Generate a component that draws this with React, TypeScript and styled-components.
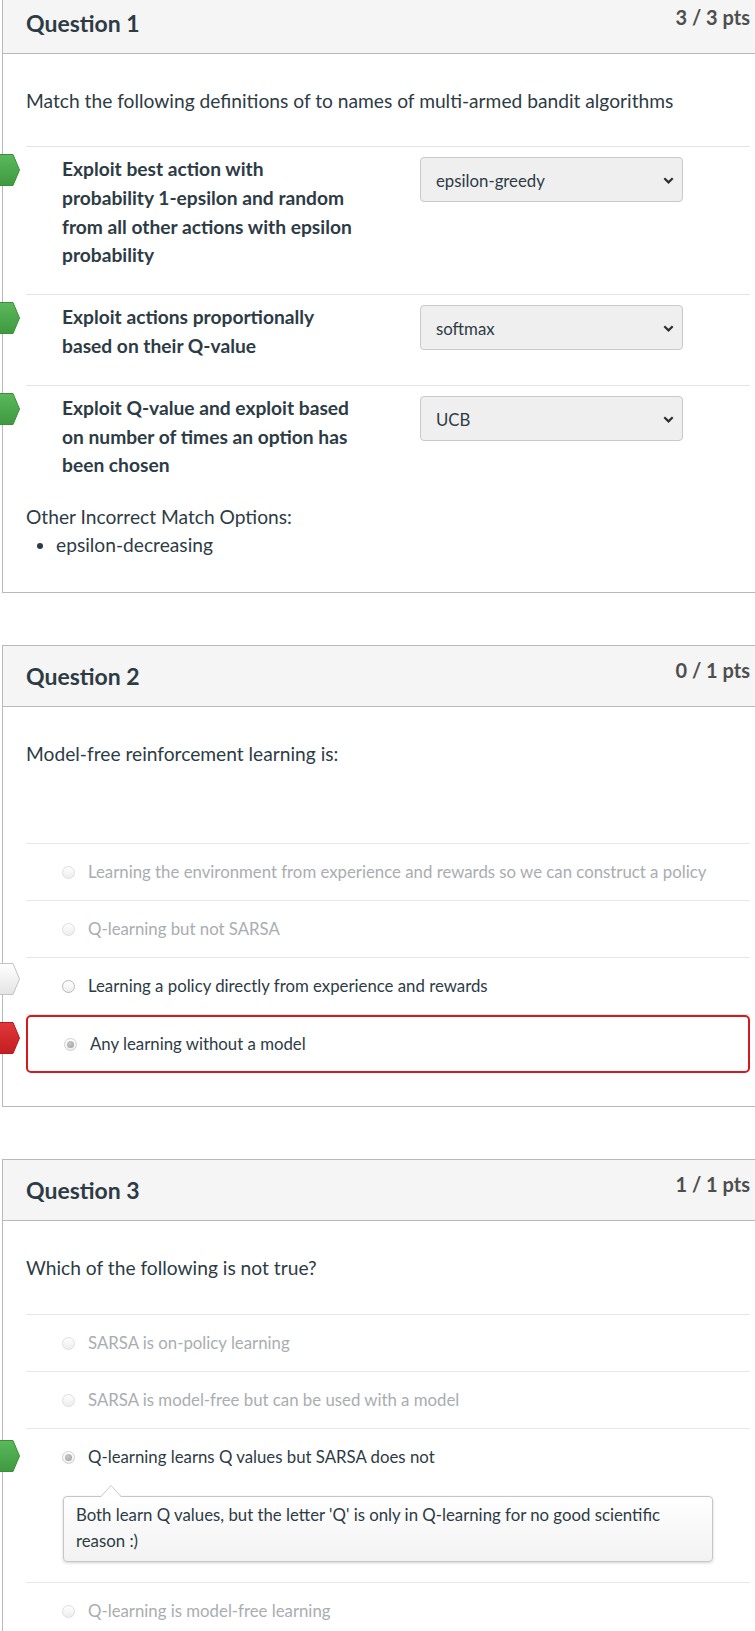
import React from 'react';
import styled, { createGlobalStyle, css } from 'styled-components';

const GlobalStyle = createGlobalStyle`
  html, body {
    margin: 0;
    padding: 0;
    background: #ffffff;
    overflow: hidden;
  }
  body {
    font-family: Lato, "Noto Sans", Arial, sans-serif;
    color: #2d3b45;
    width: 755px;
    height: 1631px;
  }
`;

const Page = styled.main`
  display: flex;
  flex-direction: column;
  gap: 52px;
  margin-top: -8px;
  padding-left: 2px;
`;

const Card = styled.section`
  width: 772px;
  box-sizing: border-box;
  border: 1px solid #b9b9b9;
  background: #fff;
`;

const Header = styled.header`
  height: 60px;
  background: #f5f5f5;
  border-bottom: 1px solid #b9b9b9;
  display: flex;
  align-items: center;
  justify-content: space-between;
  padding: 0 23px;
`;

const Title = styled.h2`
  margin: 0;
  font-size: 23px;
  font-weight: 700;
  color: #2d3b45;
`;

const Points = styled.div`
  font-size: 20px;
  font-weight: 700;
  color: #4e4e4e;
  margin-bottom: 12px;
`;

const Body = styled.div`
  padding: 33px 23px 33px;
`;

const Prompt = styled.p<{ $gap: number }>`
  margin: 0 0 ${(p) => p.$gap}px;
  font-size: 19.2px;
  line-height: 28px;
`;

type MarkKind = 'correct' | 'wrong' | 'answer';

const MarkerSvg = styled.svg<{ $top: number }>`
  position: absolute;
  left: -26px;
  top: ${(p) => p.$top}px;
  width: 20px;
  height: 32px;
  overflow: visible;
`;

const markerColors: Record<MarkKind, [string, string, string]> = {
  correct: ['#5bb85b', '#3f9a3f', '#3a8f3a'],
  wrong: ['#e0383a', '#c41e22', '#b51b1f'],
  answer: ['#ffffff', '#e4e4e4', '#c3c3c3'],
};

const Marker = ({ kind, top }: { kind: MarkKind; top: number }) => {
  const [a, b, stroke] = markerColors[kind];
  const id = `mk-${kind}`;
  return (
    <MarkerSvg $top={top} viewBox="0 0 20 32">
      <defs>
        <linearGradient id={id} x1="0" y1="0" x2="0" y2="1">
          <stop offset="0" stopColor={a} />
          <stop offset="1" stopColor={b} />
        </linearGradient>
      </defs>
      <polygon
        points="-2,0.5 13,0.5 19.5,16 13,31.5 -2,31.5"
        fill={`url(#${id})`}
        stroke={stroke}
        strokeWidth="1"
      />
    </MarkerSvg>
  );
};

const MatchRow = styled.div`
  position: relative;
  display: grid;
  grid-template-columns: 394px 263px;
  align-items: start;
  border-top: 1px solid #e4e4e4;
  padding: 8px 0 24px;
`;

const MatchLabel = styled.div`
  padding-left: 36px;
  width: 293px;
  font-weight: 700;
  font-size: 19.2px;
  line-height: 28.8px;
`;

const Select = styled.div`
  height: 45px;
  box-sizing: border-box;
  margin-top: 2px;
  border: 1px solid #c9c9c9;
  border-radius: 4px;
  background: #efefef;
  display: flex;
  align-items: center;
  justify-content: space-between;
  padding: 2px 8px 0 15px;
  font-size: 16.8px;
  color: #2d3b45;
`;

const Chevron = () => (
  <svg width="11" height="7" viewBox="0 0 11 7">
    <path d="M1.3 1.3 L5.5 5.4 L9.7 1.3" fill="none" stroke="#2f2f2f" strokeWidth="2.2" />
  </svg>
);

const OtherTitle = styled.div`
  font-size: 19.2px;
  line-height: 26px;
`;

const OtherList = styled.ul`
  margin: 1px 0 0;
  padding-left: 30px;
  font-size: 19.2px;
  line-height: 28px;
`;

const AnswerItem = styled.div`
  position: relative;
  border-top: 1px solid #e8e8e8;
`;

const AnswerLine = styled.div<{ $faded?: boolean; $wrong?: boolean }>`
  display: flex;
  align-items: center;
  padding: 16px 0 16px 36px;
  font-size: 16.8px;
  line-height: 24px;
  color: ${(p) => (p.$faded ? '#a9adb0' : '#2d3b45')};
  ${(p) =>
    p.$wrong &&
    css`
      border: 2px solid #d41a1f;
      border-radius: 5px;
      padding: 15px 0 15px 36px;
    `}
`;

const Radio = styled.span<{ $checked?: boolean; $faded?: boolean }>`
  position: relative;
  flex-shrink: 0;
  width: 13px;
  height: 13px;
  box-sizing: border-box;
  margin-right: 13px;
  border-radius: 50%;
  border: 1px solid ${(p) => (p.$faded ? '#dedede' : '#b8b8b8')};
  background: linear-gradient(#ffffff, #ededed);
  ${(p) =>
    p.$checked &&
    css`
      border-color: #d0d0d0;
      &::after {
        content: '';
        position: absolute;
        inset: 2px;
        border-radius: 50%;
        background: radial-gradient(circle at 40% 35%, #c9c9c9, #9e9e9e);
      }
    `}
`;

const Comment = styled.div`
  position: relative;
  margin: 11px 37px 20px 37px;
  padding: 5px 12px 7px;
  border: 1px solid #c6c6c6;
  border-radius: 4px;
  background: linear-gradient(#ffffff, #f2f2f2);
  box-shadow: 0 1px 3px rgba(0, 0, 0, 0.18);
  font-size: 16.8px;
  line-height: 26px;
  color: #2d3b45;

  &::before,
  &::after {
    content: '';
    position: absolute;
    left: 36px;
    width: 0;
    height: 0;
    border-left: 11px solid transparent;
    border-right: 11px solid transparent;
  }
  &::before {
    top: -12px;
    border-bottom: 12px solid #c6c6c6;
  }
  &::after {
    top: -11px;
    left: 37px;
    border-left-width: 10px;
    border-right-width: 10px;
    border-bottom: 11px solid #ffffff;
  }
`;

type Match = { text: string; value: string };

const matches: Match[] = [
  {
    text: 'Exploit best action with probability 1-epsilon and random from all other actions with epsilon probability',
    value: 'epsilon-greedy',
  },
  { text: 'Exploit actions proportionally based on their Q-value', value: 'softmax' },
  {
    text: 'Exploit Q-value and exploit based on number of times an option has been chosen',
    value: 'UCB',
  },
];

type Answer = {
  text: string;
  faded?: boolean;
  checked?: boolean;
  wrong?: boolean;
  marker?: MarkKind;
  markerTop?: number;
  comment?: string;
};

const q2Answers: Answer[] = [
  {
    text: 'Learning the environment from experience and rewards so we can construct a policy',
    faded: true,
  },
  { text: 'Q-learning but not SARSA', faded: true },
  {
    text: 'Learning a policy directly from experience and rewards',
    marker: 'answer',
    markerTop: 5,
  },
  { text: 'Any learning without a model', checked: true, wrong: true, marker: 'wrong', markerTop: 7 },
];

const q3Answers: Answer[] = [
  { text: 'SARSA is on-policy learning', faded: true },
  { text: 'SARSA is model-free but can be used with a model', faded: true },
  {
    text: 'Q-learning learns Q values but SARSA does not',
    checked: true,
    marker: 'correct',
    markerTop: 11,
    comment:
      "Both learn Q values, but the letter 'Q' is only in Q-learning for no good scientific reason :)",
  },
  { text: 'Q-learning is model-free learning', faded: true },
];

const AnswerList = ({ answers }: { answers: Answer[] }) => (
  <div>
    {answers.map((a) => (
      <AnswerItem key={a.text}>
        {a.marker && <Marker kind={a.marker} top={a.markerTop ?? 10} />}
        <AnswerLine $faded={a.faded} $wrong={a.wrong}>
          <Radio $checked={a.checked} $faded={a.faded} />
          {a.text}
        </AnswerLine>
        {a.comment && <Comment>{a.comment}</Comment>}
      </AnswerItem>
    ))}
  </div>
);

const QuestionCard = ({
  title,
  points,
  children,
}: {
  title: string;
  points: string;
  children: React.ReactNode;
}) => (
  <Card>
    <Header>
      <Title>{title}</Title>
      <Points>{points}</Points>
    </Header>
    <Body>{children}</Body>
  </Card>
);

export default function App() {
  return (
    <>
      <GlobalStyle />
      <Page>
        <QuestionCard title="Question 1" points="3 / 3 pts">
          <Prompt $gap={31}>
            Match the following definitions of to names of multi-armed bandit algorithms
          </Prompt>
          {matches.map((m) => (
            <MatchRow key={m.value}>
              <Marker kind="correct" top={7} />
              <MatchLabel>{m.text}</MatchLabel>
              <Select>
                <span>{m.value}</span>
                <Chevron />
              </Select>
            </MatchRow>
          ))}
          <OtherTitle>Other Incorrect Match Options:</OtherTitle>
          <OtherList>
            <li>epsilon-decreasing</li>
          </OtherList>
        </QuestionCard>

        <QuestionCard title="Question 2" points="0 / 1 pts">
          <Prompt $gap={75}>Model-free reinforcement learning is:</Prompt>
          <AnswerList answers={q2Answers} />
        </QuestionCard>

        <QuestionCard title="Question 3" points="1 / 1 pts">
          <Prompt $gap={32}>Which of the following is not true?</Prompt>
          <AnswerList answers={q3Answers} />
        </QuestionCard>
      </Page>
    </>
  );
}
